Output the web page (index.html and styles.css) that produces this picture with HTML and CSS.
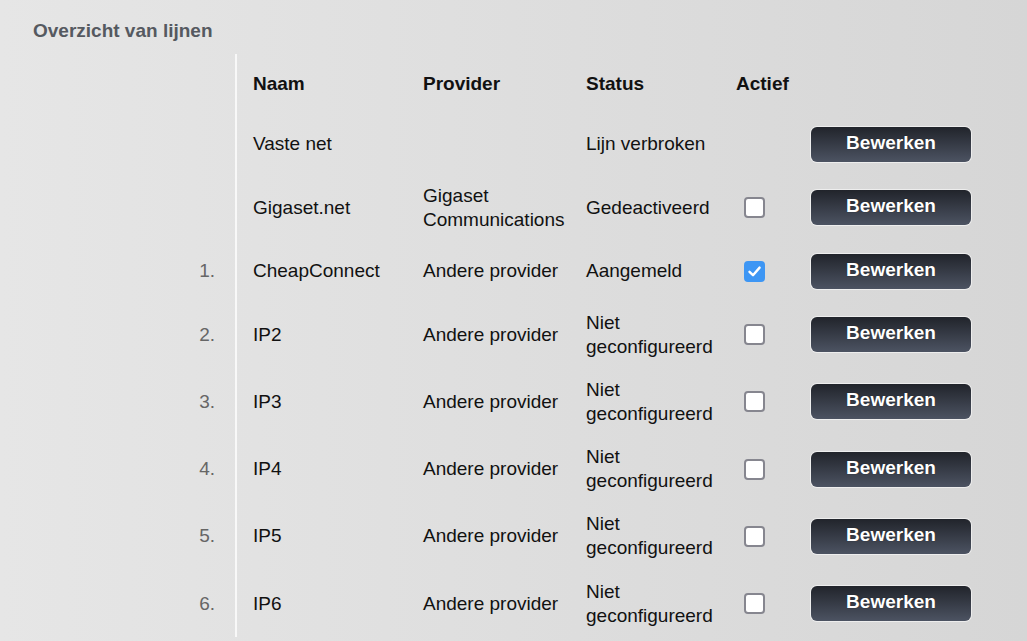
FILE: index.html
```html
<!DOCTYPE html>
<html lang="nl">
<head>
    <meta charset="UTF-8">
    <title>Overzicht van lijnen</title>
    <link rel="stylesheet" href="styles.css">
</head>
<body>
    <h2 class="page-title">Overzicht van lijnen</h2>

    <div class="lines">
        <div class="line-row head">
            <div class="cell nr"></div>
            <div class="cell">Naam</div>
            <div class="cell">Provider</div>
            <div class="cell">Status</div>
            <div class="cell">Actief</div>
            <div class="cell"></div>
        </div>

        <div class="line-row">
            <div class="cell nr"></div>
            <div class="cell">Vaste net</div>
            <div class="cell"></div>
            <div class="cell">Lijn verbroken</div>
            <div class="cell"></div>
            <div class="cell"><button class="edit-button">Bewerken</button></div>
        </div>

        <div class="line-row">
            <div class="cell nr"></div>
            <div class="cell">Gigaset.net</div>
            <div class="cell">Gigaset Communications</div>
            <div class="cell">Gedeactiveerd</div>
            <div class="cell"><span class="check"></span></div>
            <div class="cell"><button class="edit-button">Bewerken</button></div>
        </div>

        <div class="line-row">
            <div class="cell nr">1.</div>
            <div class="cell">CheapConnect</div>
            <div class="cell">Andere provider</div>
            <div class="cell">Aangemeld</div>
            <div class="cell">
                <span class="check checked">
                    <svg width="15" height="15" viewBox="0 0 15 15"><path d="M2.5 7.8 L6 11.2 L12.6 3.6" fill="none" stroke="#fff" stroke-width="2.4" stroke-linecap="round" stroke-linejoin="round"/></svg>
                </span>
            </div>
            <div class="cell"><button class="edit-button">Bewerken</button></div>
        </div>

        <div class="line-row">
            <div class="cell nr">2.</div>
            <div class="cell">IP2</div>
            <div class="cell">Andere provider</div>
            <div class="cell">Niet geconfigureerd</div>
            <div class="cell"><span class="check"></span></div>
            <div class="cell"><button class="edit-button">Bewerken</button></div>
        </div>

        <div class="line-row">
            <div class="cell nr">3.</div>
            <div class="cell">IP3</div>
            <div class="cell">Andere provider</div>
            <div class="cell">Niet geconfigureerd</div>
            <div class="cell"><span class="check"></span></div>
            <div class="cell"><button class="edit-button">Bewerken</button></div>
        </div>

        <div class="line-row">
            <div class="cell nr">4.</div>
            <div class="cell">IP4</div>
            <div class="cell">Andere provider</div>
            <div class="cell">Niet geconfigureerd</div>
            <div class="cell"><span class="check"></span></div>
            <div class="cell"><button class="edit-button">Bewerken</button></div>
        </div>

        <div class="line-row">
            <div class="cell nr">5.</div>
            <div class="cell">IP5</div>
            <div class="cell">Andere provider</div>
            <div class="cell">Niet geconfigureerd</div>
            <div class="cell"><span class="check"></span></div>
            <div class="cell"><button class="edit-button">Bewerken</button></div>
        </div>

        <div class="line-row">
            <div class="cell nr">6.</div>
            <div class="cell">IP6</div>
            <div class="cell">Andere provider</div>
            <div class="cell">Niet geconfigureerd</div>
            <div class="cell"><span class="check"></span></div>
            <div class="cell"><button class="edit-button">Bewerken</button></div>
        </div>
    </div>
</body>
</html>
```

FILE: styles.css
```css
* {
    box-sizing: border-box;
    margin: 0;
    padding: 0;
}
body {
    height: 100vh;
    overflow: hidden;
    background: linear-gradient(90deg, #e6e6e6, #d6d6d6);
    font-family: 'Liberation Sans', Arial, sans-serif;
    font-size: 19px;
    line-height: 24px;
    color: #111;
}
.page-title {
    font-size: 19px;
    line-height: 24px;
    font-weight: bold;
    color: #555960;
    padding: 19px 0 0 33px;
    margin-bottom: 11px;
}

/* table of lines */
.line-row {
    display: grid;
    grid-template-columns: 237px 170px 163px 150px 75px 200px;
    min-height: 60px;
}
.line-row.head {
    font-weight: bold;
}
.cell {
    display: flex;
    align-items: center;
    padding: 9.6px 0 9.6px 16px;
}
.cell.nr {
    justify-content: flex-end;
    padding: 0 20px 0 0;
    border-right: 2px solid #f8f8f8;
    color: #666;
}
.check {
    display: flex;
    justify-content: center;
    align-items: center;
    width: 21px;
    height: 21px;
    margin-left: 8px;
    background: #fff;
    border: 2px solid #86868f;
    border-radius: 4px;
}
.check.checked {
    background: #3d96f4;
    border-color: #3d96f4;
}
.edit-button {
    width: 160px;
    height: 35px;
    padding-bottom: 3px;
    border: none;
    border-radius: 6px;
    background: linear-gradient(180deg, #21242b, #4c5362);
    box-shadow: 0 0 0 1px rgba(255, 255, 255, 0.55);
    color: #fff;
    font-family: 'Liberation Sans', Arial, sans-serif;
    font-size: 19px;
    font-weight: bold;
    text-shadow: 0 0 1px rgba(0, 0, 0, 0.6);
    cursor: pointer;
}
```
